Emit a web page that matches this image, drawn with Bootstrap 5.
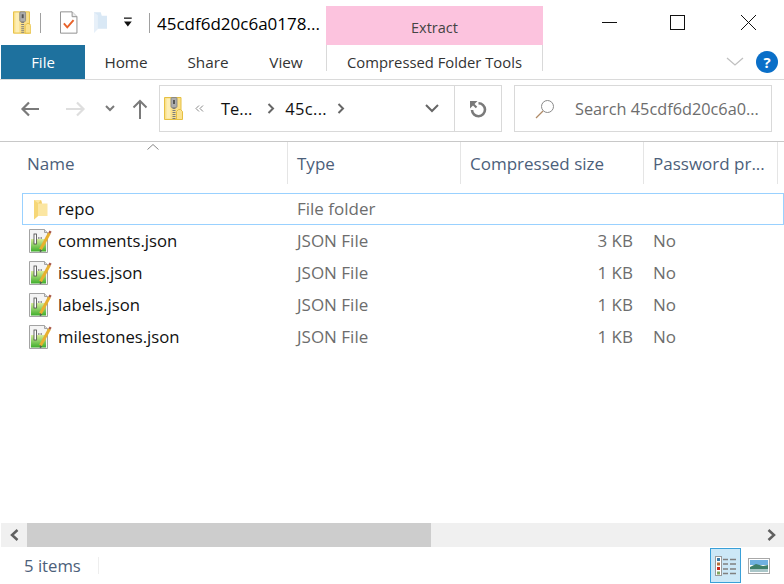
<!DOCTYPE html>
<html lang="en">
<head>
  <meta charset="UTF-8">
  <title>45cdf6d20c6a0178</title>
  <link href="https://cdn.jsdelivr.net/npm/bootstrap@5.3.3/dist/css/bootstrap.min.css" rel="stylesheet">
  <style>
    html, body { height: 100%; }
    body {
      background: #fff;
      color: #000;
      font-family: "Open Sans", "Noto Sans", sans-serif;
      font-size: 17px;
      line-height: 20px;
      overflow: hidden;
    }
    .win { width: 784px; height: 584px; }

    /* title bar */
    .title-bar { height: 45px; padding-left: 13px; }
    .qat { width: 137px; padding-top: 11px; }
    .qat-sep { width: 1px; height: 20px; background: #a0a0a0; margin-left: 9px; }
    .qat-gap { margin-left: 16px; }
    .qat-check { margin-left: 19px; }
    .title-text { font-size: 17px; width: 169px; margin-left: 7px; padding-top: 14px; white-space: nowrap; }
    .extract-tab {
      width: 217px; height: 39px; margin-top: 6px;
      background: #fcc3de; color: #444; padding-top: 12px; text-align: center; font-size: 14.5px;
    }
    .win-btns { margin-left: auto; }
    .win-btns svg { display: block; }

    /* ribbon tabs */
    .ribbon { height: 35px; border-bottom: 1px solid #dadada; padding-left: 1px; }
    .tab-file { width: 84px; background: #1e719e; color: #fff; text-align: center; padding-top: 7px; font-size: 15px; }
    .tab-item { color: #333; padding-top: 7px; font-size: 15.3px; text-align: center; }
    .tab-home { width: 82px; }
    .tab-share { width: 82px; }
    .tab-view { width: 74px; }
    .tab-tools {
      width: 217px; height: 26px; margin-left: 3px; border-left: 1px solid #d9d9d9; border-right: 1px solid #d9d9d9;
      color: #333; text-align: center; padding-top: 7px; font-size: 14.8px; white-space: nowrap;
    }
    .ribbon-end { margin-left: auto; padding-right: 6px; gap: 12px; }
    .help-dot {
      width: 22px; height: 22px; border-radius: 50%; background: #0a6fc8; color: #fff;
      font-weight: 700; font-size: 15px; line-height: 22px; text-align: center;
    }

    /* address bar */
    .nav-row { height: 62px; border-bottom: 1px solid #c8c8c8; padding-top: 5px; }
    .nav-btns { width: 159px; height: 47px; padding-left: 20px; }
    .nav-fwd { margin-left: 27px; }
    .nav-down { margin-left: 19px; }
    .nav-up { margin-left: 17px; }
    .addr-box { width: 343px; height: 47px; border: 1px solid #d9d9d9; margin-right: 12px; }
    .addr-path { height: 100%; flex: 1; padding-left: 4px; font-size: 16.5px; color: #111; }
    .addr-more { margin-left: 12px; }
    .addr-crumb { margin-left: 17px; white-space: nowrap; }
    .addr-chev { margin-left: 15px; }
    .addr-next { margin-left: 10px; letter-spacing: .3px; }
    .addr-end { margin-left: 10px; }
    .addr-drop { margin-left: auto; margin-right: 15px; }
    .addr-refresh { width: 47px; height: 100%; border-left: 1px solid #d9d9d9; }
    .search-box {
      width: 258px; height: 47px; border: 1px solid #d9d9d9; color: #6d6d6d; gap: 20px;
      padding-left: 20px; padding-top: 1px; font-size: 16.3px; white-space: nowrap; overflow: hidden;
    }

    /* file list */
    .col-name { width: 266px; }
    .col-type { width: 173px; }
    .col-size { width: 183px; }
    .col-pass { width: 134px; }
    .list-head { height: 42px; padding-left: 22px; color: #4c607a; position: relative; }
    .list-head > div { height: 100%; padding: 12px 0 0 9px; border-right: 1px solid #e5e5e5; white-space: nowrap; overflow: hidden; }
    .list-head > .col-name { padding-left: 5px; }
    .sort-mark { position: absolute; left: 147px; top: 2px; }
    .list-body { flex: 1; padding: 9px 0 0 22px; }
    .file-row { height: 32px; border: 1px solid transparent; color: #6d6d6d; width: 761px; }
    .file-row.on { border-color: #99d1ff; width: 762px; }
    .file-row > div { padding-left: 8px; white-space: nowrap; }
    .file-row .col-name { display: flex; align-items: center; color: #111; padding-left: 6px; gap: 6px; font-size: 16.7px; }
    .file-row .col-size { text-align: right; padding-right: 12px; }
    .file-icon { width: 23px; height: 24px; display: flex; justify-content: center; align-items: center; }

    /* bottom */
    .scroll-track { height: 24px; background: #f0f0f0; margin-left: 1px; }
    .scroll-btn { width: 26px; }
    .scroll-thumb { width: 404px; background: #cdcdcd; }
    .status-bar { height: 37px; padding-left: 24px; color: #4c607a; font-size: 16.7px; }
    .status-sep { width: 1px; height: 17px; background: #eee; margin-left: 17px; }
    .view-btns { margin-left: auto; padding-right: 14px; gap: 7px; }
    .view-on { width: 31px; height: 35px; background: #cce8f7; border: 1px solid #3aa0d8; }
  </style>
</head>
<body>
  <svg width="0" height="0" class="position-absolute">
    <defs>
      <linearGradient id="greenFill" x1="0" y1="0" x2="0" y2="1">
        <stop offset="0" stop-color="#d5ec9a"/>
        <stop offset="1" stop-color="#3fae2c"/>
      </linearGradient>
    </defs>
    <symbol id="zip" viewBox="0 0 19 23">
      <path d="M.5.500h16.500v22H.500z" fill="#fae08a" stroke="#e6c043"/>
      <path d="M2.500 1.500h4v20h-4z" fill="#fdeeb5"/>
      <path d="M12.500 14.500l2-2h2l2 2v8h-6z" fill="#fbe28f" stroke="#e6c043"/>
      <rect x="7" y=".5" width="6" height="10" rx="1" fill="#adadad" stroke="#808080" stroke-width=".8"/>
      <rect x="9" y="3" width="2" height="4" fill="#555"/>
      <path d="M10 11v11.500" stroke="#7c7c7c" stroke-width="3" stroke-dasharray="1 1"/>
    </symbol>
    <symbol id="folder" viewBox="0 0 15 21">
      <path d="M1 1h7l1 3.500h5.500V17H5L1 20.500z" fill="#fbe6a2"/>
      <path d="M1 1l4 3v13L1 20.500z" fill="#f6d777"/>
      <path d="M8 1l1 3.500H5z" fill="#f3cf6d"/>
    </symbol>
    <symbol id="jsonf" viewBox="0 0 23 24">
      <path d="M.5.500h15l3 3v20H.500z" fill="#f4f4f4" stroke="#a3a3a3"/>
      <path d="M15.500.5v3h3" fill="#ddd" stroke="#a3a3a3"/>
      <path d="M2 10h15v12.500H2z" fill="url(#greenFill)"/>
      <rect x="5" y="5" width="2.500" height="10" fill="#fff" stroke="#444" stroke-width=".8"/>
      <path d="M9 9h5" stroke="#444" stroke-width="1.200" stroke-dasharray="1.500 1"/>
      <path d="M11.500 20.500L20.500 4" stroke="#e8b02f" stroke-width="3"/>
      <path d="M11.500 20.500l-.5 2.500 2-1.500" fill="#555" stroke="#555" stroke-width=".6"/>
      <path d="M20 2.500l2 1.200" stroke="#a9584a" stroke-width="2.500"/>
    </symbol>
  </svg>

  <div class="win d-flex flex-column">
    <div class="title-bar d-flex align-items-start">
      <div class="qat d-flex align-items-center flex-shrink-0">
        <svg width="19" height="23"><use href="#zip"/></svg>
        <span class="qat-sep"></span>
        <svg class="qat-check" width="18" height="23" viewBox="0 0 18 23">
          <path d="M.5.500h12l5 5v17H.500z" fill="#fff" stroke="#8f8f8f"/>
          <path d="M12.500.5v5h5" fill="#eee" stroke="#8f8f8f"/>
          <path d="M4 12.500l3.500 4L14 9" fill="none" stroke="#e8622a" stroke-width="2"/>
        </svg>
        <svg class="qat-gap" width="14" height="21" viewBox="0 0 14 21">
          <path d="M0 0h7l1 3.500h6V17H4L0 21z" fill="#d9e8f5"/>
          <path d="M0 0l4 3v14L0 21z" fill="#e7f0f9"/>
        </svg>
        <svg class="qat-gap" width="10" height="11" viewBox="0 0 10 11">
          <path d="M1 1h8" stroke="#111" stroke-width="1.300"/><path d="M1 4.500h8l-4 5z" fill="#111"/>
        </svg>
        <span class="qat-sep qat-gap"></span>
      </div>
      <div class="title-text">45cdf6d20c6a0178...</div>
      <div class="extract-tab flex-shrink-0">Extract</div>
      <div class="win-btns d-flex">
        <svg width="60" height="45" viewBox="0 0 60 45"><path d="M1 22.500h15" stroke="#111"/></svg>
        <svg width="74" height="45" viewBox="0 0 74 45"><rect x="9.500" y="15.500" width="14" height="14" fill="none" stroke="#111"/></svg>
        <svg width="49" height="45" viewBox="0 0 49 45"><path d="M6 15l15 15M21 15L6 30" stroke="#111" fill="none"/></svg>
      </div>
    </div>

    <div class="ribbon d-flex">
      <div class="tab-file">File</div>
      <div class="tab-item tab-home">Home</div>
      <div class="tab-item tab-share">Share</div>
      <div class="tab-item tab-view">View</div>
      <div class="tab-tools">Compressed Folder Tools</div>
      <div class="ribbon-end d-flex align-items-center">
        <svg width="18" height="10" viewBox="0 0 18 10"><path d="M1 1l8 7 8-7" fill="none" stroke="#c0c0c0" stroke-width="1.300"/></svg>
        <div class="help-dot">?</div>
      </div>
    </div>

    <div class="nav-row d-flex">
      <div class="nav-btns d-flex align-items-center">
        <svg width="19" height="16" viewBox="0 0 19 16"><path d="M19 8H3M9 1.500L2.500 8 9 14.500" fill="none" stroke="#7a7a7a" stroke-width="2.200"/></svg>
        <svg class="nav-fwd" width="20" height="16" viewBox="0 0 20 16"><path d="M0 8h17M11 1.500L17.500 8 11 14.500" fill="none" stroke="#dedede" stroke-width="2.200"/></svg>
        <svg class="nav-down" width="10" height="7" viewBox="0 0 10 7"><path d="M1 1l4 4 4-4" fill="none" stroke="#7a7a7a" stroke-width="2"/></svg>
        <svg class="nav-up" width="16" height="20" viewBox="0 0 16 20"><path d="M8 20V2M1.500 8.500L8 2l6.500 6.500" fill="none" stroke="#7a7a7a" stroke-width="2"/></svg>
      </div>
      <div class="addr-box d-flex align-items-center">
        <div class="addr-path d-flex align-items-center">
          <svg width="19" height="23"><use href="#zip"/></svg>
          <svg class="addr-more" width="9" height="7" viewBox="0 0 9 7"><path d="M4 .5L1 3.500 4 6.500M8 .5L5 3.500 8 6.500" fill="none" stroke="#888"/></svg>
          <span class="addr-crumb">Te...</span>
          <svg class="addr-chev" width="8" height="11" viewBox="0 0 8 11"><path d="M1.500 1l4.500 4.500L1.500 10" fill="none" stroke="#666" stroke-width="2"/></svg>
          <span class="addr-next">45c...</span>
          <svg class="addr-end" width="8" height="11" viewBox="0 0 8 11"><path d="M1.500 1l4.500 4.500L1.500 10" fill="none" stroke="#666" stroke-width="2"/></svg>
          <svg class="addr-drop" width="14" height="9" viewBox="0 0 14 9"><path d="M1 1l6 6 6-6" fill="none" stroke="#666" stroke-width="2"/></svg>
        </div>
        <div class="addr-refresh d-flex align-items-center justify-content-center">
          <svg width="18" height="18" viewBox="0 0 18 18">
            <path d="M9.500 3.200A6.500 6.500 0 1 1 3 10" fill="none" stroke="#7a7a7a" stroke-width="2.600"/>
            <path d="M1 1h7.500L1 8.500z" fill="#7a7a7a"/>
            <path d="M3.500 3.500l4 4" stroke="#7a7a7a" stroke-width="2.200"/>
          </svg>
        </div>
      </div>
      <div class="search-box d-flex align-items-center">
        <svg class="flex-shrink-0" width="20" height="20" viewBox="0 0 20 20"><circle cx="12.500" cy="7.500" r="6" fill="none" stroke="#8a8a8a"/><path d="M8 12l-7 7" stroke="#b08a66" stroke-width="1.300"/></svg>
        <span>Search 45cdf6d20c6a0...</span>
      </div>
    </div>

    <div class="list-head d-flex">
      <svg class="sort-mark" width="12" height="6" viewBox="0 0 12 6"><path d="M.5 5.500L6 .5l5.500 5" fill="none" stroke="#888"/></svg>
      <div class="col-name">Name</div>
      <div class="col-type">Type</div>
      <div class="col-size">Compressed size</div>
      <div class="col-pass">Password pr...</div>
    </div>

    <div class="list-body">
      <div class="file-row on d-flex align-items-center">
        <div class="col-name"><span class="file-icon"><svg width="15" height="21"><use href="#folder"/></svg></span>repo</div>
        <div class="col-type">File folder</div>
      </div>
      <div class="file-row d-flex align-items-center">
        <div class="col-name"><span class="file-icon"><svg width="23" height="24"><use href="#jsonf"/></svg></span>comments.json</div>
        <div class="col-type">JSON File</div><div class="col-size">3 KB</div><div class="col-pass">No</div>
      </div>
      <div class="file-row d-flex align-items-center">
        <div class="col-name"><span class="file-icon"><svg width="23" height="24"><use href="#jsonf"/></svg></span>issues.json</div>
        <div class="col-type">JSON File</div><div class="col-size">1 KB</div><div class="col-pass">No</div>
      </div>
      <div class="file-row d-flex align-items-center">
        <div class="col-name"><span class="file-icon"><svg width="23" height="24"><use href="#jsonf"/></svg></span>labels.json</div>
        <div class="col-type">JSON File</div><div class="col-size">1 KB</div><div class="col-pass">No</div>
      </div>
      <div class="file-row d-flex align-items-center">
        <div class="col-name"><span class="file-icon"><svg width="23" height="24"><use href="#jsonf"/></svg></span>milestones.json</div>
        <div class="col-type">JSON File</div><div class="col-size">1 KB</div><div class="col-pass">No</div>
      </div>
    </div>

    <div class="scroll-track d-flex">
      <div class="scroll-btn d-flex align-items-center justify-content-center">
        <svg width="9" height="12" viewBox="0 0 9 12"><path d="M7.500 1L2 6l5.500 5" fill="none" stroke="#606060" stroke-width="2.500"/></svg>
      </div>
      <div class="scroll-thumb"></div>
      <div class="scroll-btn d-flex align-items-center justify-content-center ms-auto">
        <svg width="9" height="12" viewBox="0 0 9 12"><path d="M1.500 1L7 6l-5.500 5" fill="none" stroke="#606060" stroke-width="2.500"/></svg>
      </div>
    </div>

    <div class="status-bar d-flex align-items-center">
      <span>5 items</span>
      <span class="status-sep"></span>
      <div class="view-btns d-flex align-items-center">
        <div class="view-on d-flex align-items-center justify-content-center">
          <svg width="21" height="20" viewBox="0 0 21 20">
            <rect x=".5" y=".5" width="6" height="19" fill="#fff" stroke="#9a9a9a"/>
            <path d="M2 2h3v3H2z" fill="#3a7ca8"/><path d="M2 6.500h3v3H2z" fill="#b5713a"/><path d="M2 11h3v3H2z" fill="#c9281e"/><path d="M2 15.500h3v3H2z" fill="#7ea863"/>
            <path d="M8 3.500h5M15 3.500h6M8 8h5M15 8h6M8 13h5M15 13h6M8 17.500h5M15 17.500h6" stroke="#808080" stroke-width="1.300"/>
          </svg>
        </div>
        <svg width="22" height="16" viewBox="0 0 22 16">
          <rect x=".5" y=".5" width="21" height="15" fill="#fff" stroke="#a8a8a8"/>
          <rect x="2" y="2" width="18" height="5" fill="#6fb0e0"/>
          <path d="M2 9l6-3 7 2 5-1v4H2z" fill="#3f7f6a"/>
          <rect x="2" y="11" width="18" height="3" fill="#a9c6c8"/>
        </svg>
      </div>
    </div>
  </div>
</body>
</html>
